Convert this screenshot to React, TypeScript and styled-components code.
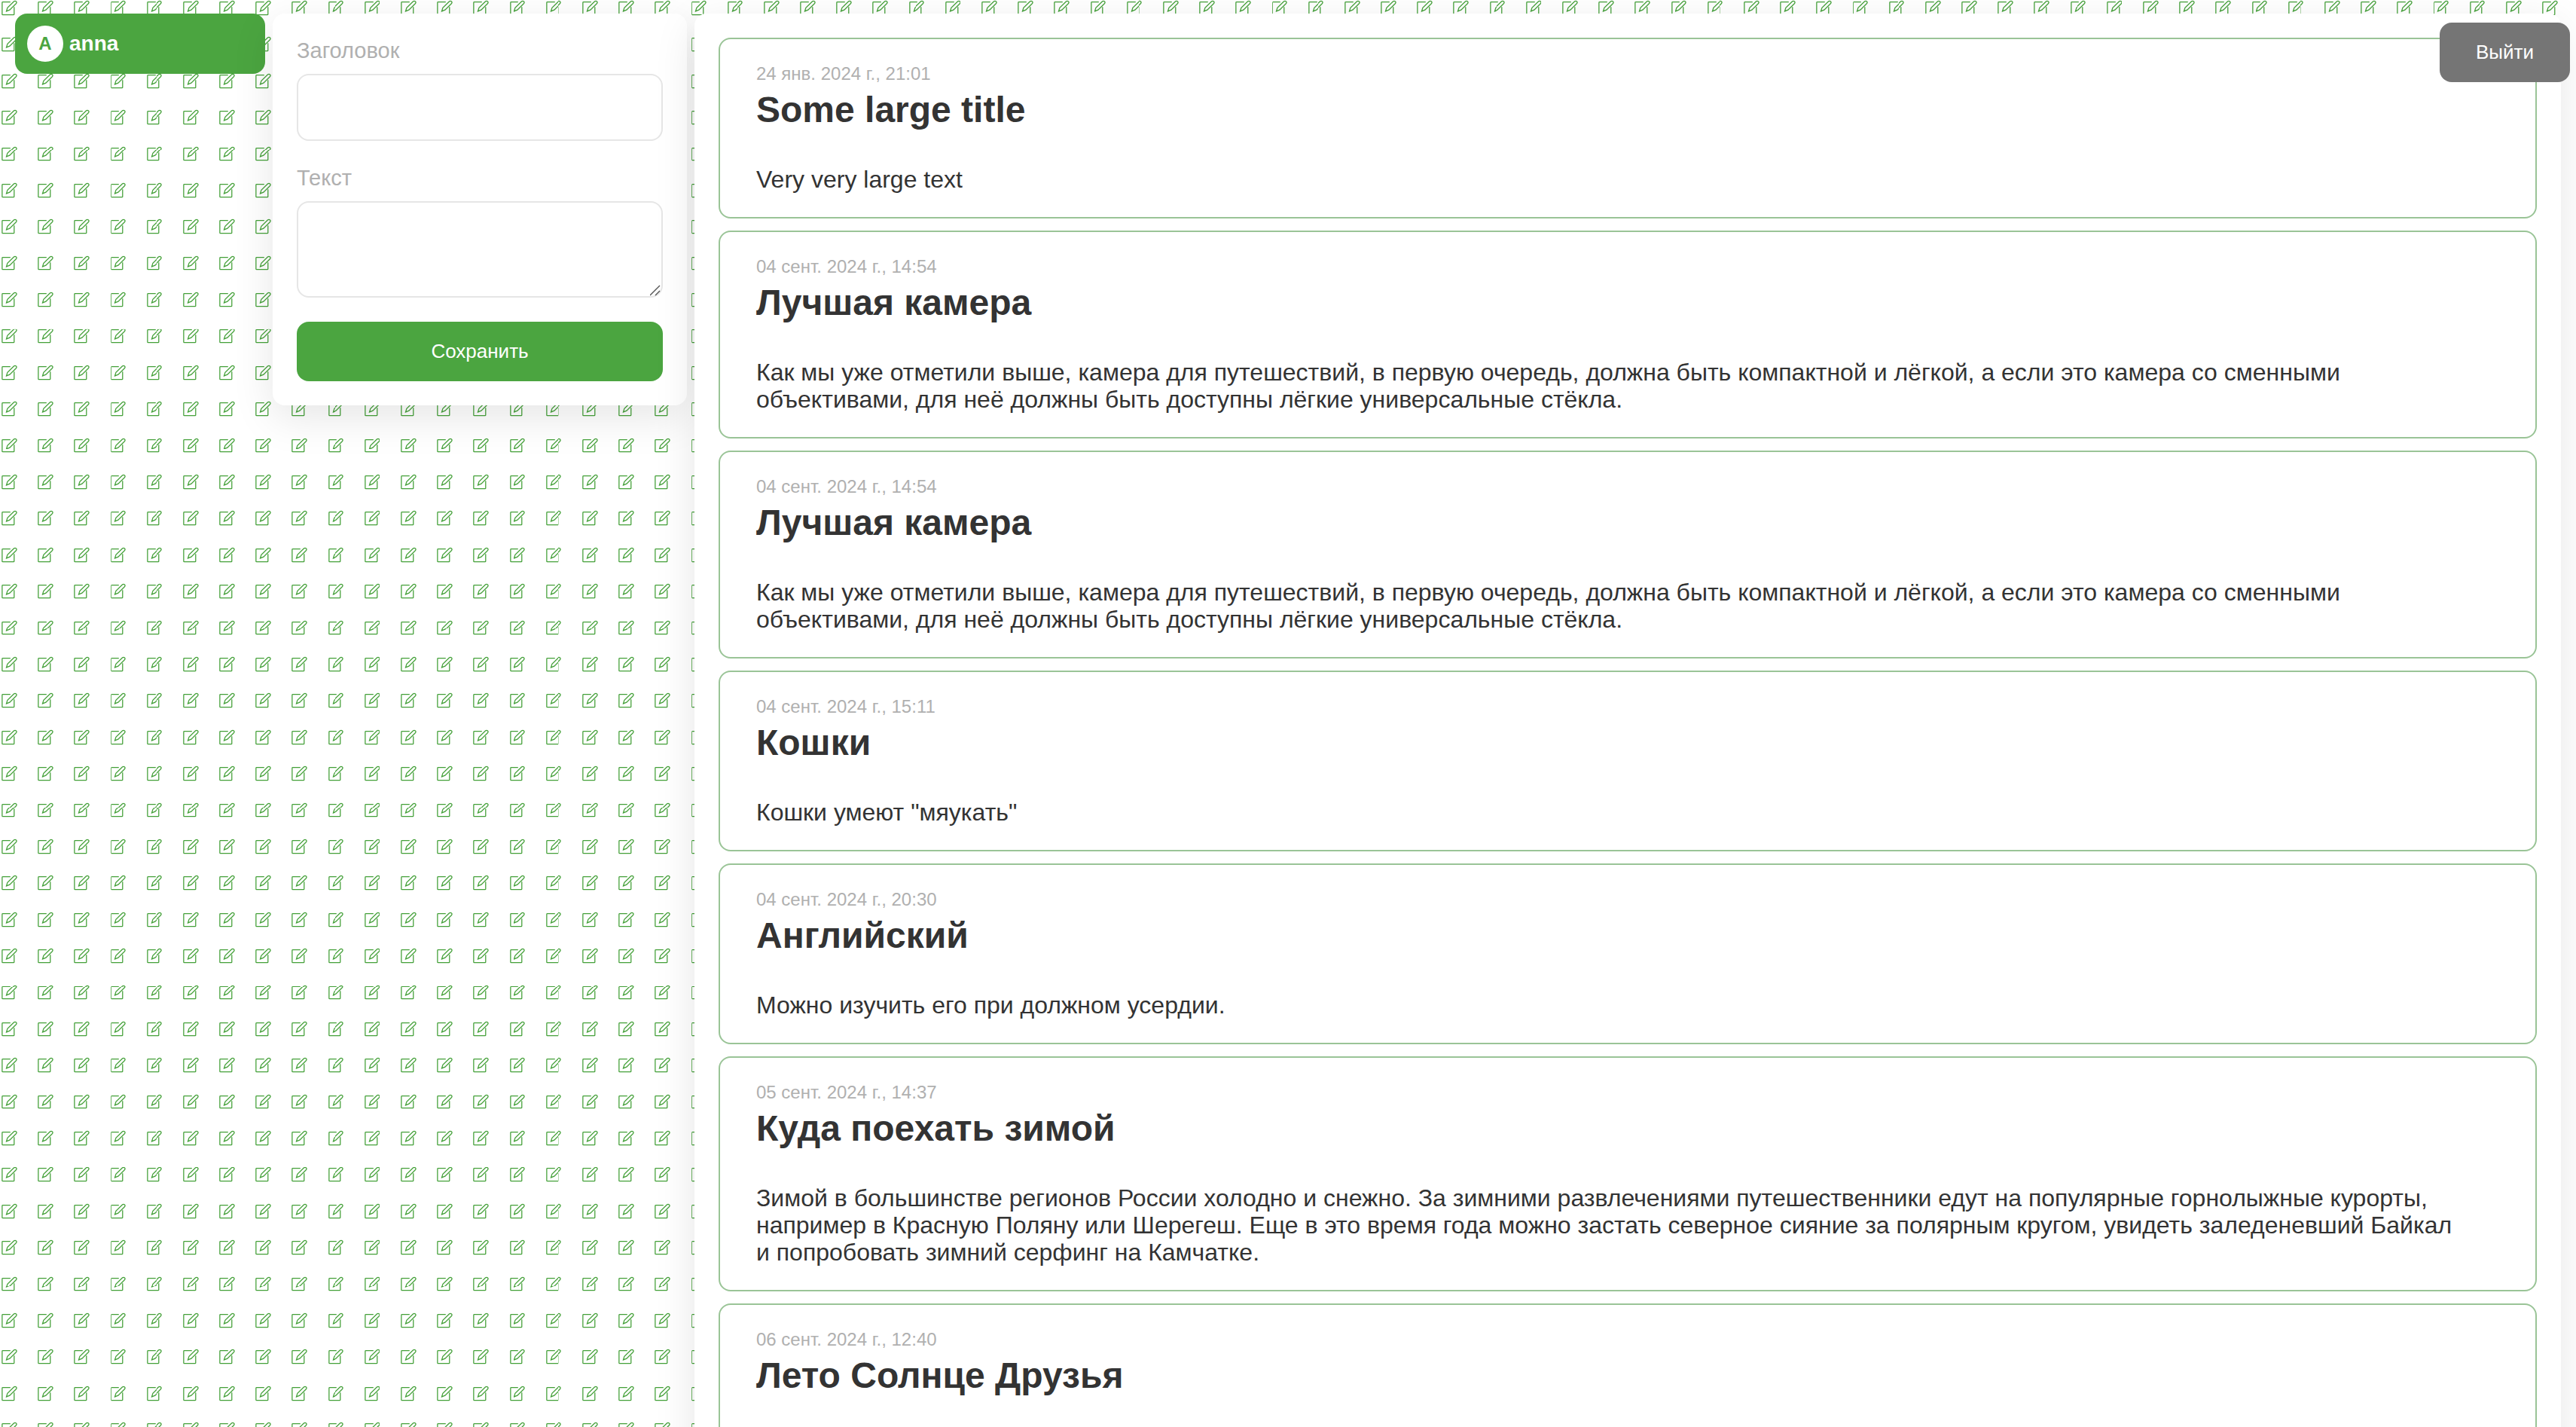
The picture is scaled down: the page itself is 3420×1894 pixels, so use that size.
import React from 'react';
import styled, { createGlobalStyle } from 'styled-components';

const GREEN = '#4ba540';

const tile = encodeURIComponent(
  `<svg xmlns="http://www.w3.org/2000/svg" width="48" height="48" viewBox="0 0 48 48" preserveAspectRatio="none" fill="none" stroke="#43a038" stroke-width="1.25"><path d="M13.5 2.6H3.6Q2.8 2.6 2.8 3.4V18.5Q2.8 19.3 3.6 19.3H17.6Q18.4 19.3 18.4 18.5V9"/><path d="M8.3 14.6L9.7 10.2L18 2Q19.6 0.6 21 1.9Q22.2 3.2 20.9 4.6L12.6 12.9Z"/></svg>`
);

const grip = encodeURIComponent(
  `<svg xmlns="http://www.w3.org/2000/svg" width="15" height="15" viewBox="0 0 15 15" stroke="#555" stroke-width="1.4"><path d="M0 14L13 1M7 14L13 8"/></svg>`
);

const GlobalStyle = createGlobalStyle`
  * { box-sizing: border-box; }
  body {
    margin: 0;
    min-height: 100vh;
    background: #fff url("data:image/svg+xml,${tile}") 0 0 / 1.409% 2.555%;
    font-family: Helvetica, "Liberation Sans", Arial, sans-serif;
    color: #333;
  }
`;

const Page = styled.div`
  display: flex;
  align-items: flex-start;
  gap: 10px;
  height: 100vh;
  padding: 18px 20px 0;
  overflow: hidden;
`;

const UserBadge = styled.div`
  flex: 0 0 332px;
  display: flex;
  align-items: center;
  gap: 8px;
  padding: 16px;
  border-radius: 16px;
  background: ${GREEN};
  color: #fff;
  font-size: 28px;
  font-weight: 700;
`;

const Avatar = styled.span`
  display: grid;
  place-items: center;
  width: 48px;
  height: 48px;
  border-radius: 50%;
  background: #fff;
  color: ${GREEN};
  font-size: 24px;
`;

const Panel = styled.div`
  padding: 32px;
  border-radius: 16px;
  background: #fff;
  box-shadow: 0 16px 56px rgba(0, 0, 0, 0.1);
`;

const NoteForm = styled(Panel).attrs({ as: 'form' })`
  flex: 0 0 550px;
  display: flex;
  flex-direction: column;
`;

const Label = styled.label`
  margin-bottom: 14px;
  color: #b0b0b0;
  font-size: 29px;
  line-height: 34px;
`;

const Input = styled.input`
  height: 89px;
  margin-bottom: 32px;
  padding: 0 24px;
  border: 2px solid #e6e6e6;
  border-radius: 16px;
  background: #fff;
  font: inherit;
  font-size: 28px;
`;

const TextArea = styled(Input).attrs({ as: 'textarea' })`
  height: 128px;
  padding: 24px;
  resize: vertical;

  &::-webkit-resizer {
    background: url("data:image/svg+xml,${grip}") no-repeat;
  }
`;

const Button = styled.button<{ $tone: string }>`
  padding: 24px 48px;
  border: 0;
  border-radius: 16px;
  background: ${(p) => p.$tone};
  color: #fff;
  font-family: inherit;
  font-size: 26px;
  line-height: 31px;
`;

const LogoutButton = styled(Button)`
  position: fixed;
  top: 30px;
  right: 8px;
`;

const Notes = styled(Panel)`
  flex: 1;
  min-width: 0;
  display: flex;
  flex-direction: column;
  gap: 16px;
`;

const Note = styled.article`
  padding: 32px 48px;
  border: 2px solid #9ac497;
  border-radius: 16px;
`;

const Posted = styled.time`
  display: block;
  color: #b0b0b0;
  font-size: 24px;
  line-height: 28px;
`;

const Title = styled.h2`
  margin: 6px 0 46px;
  font-size: 48px;
  line-height: 56px;
`;

const Body = styled.p`
  margin: 0;
  font-size: 32px;
  line-height: 36px;
`;

const camera =
  'Как мы уже отметили выше, камера для путешествий, в первую очередь, должна быть компактной и лёгкой, а если это камера со сменными объективами, для неё должны быть доступны лёгкие универсальные стёкла.';

const notes = [
  { date: '24 янв. 2024 г., 21:01', title: 'Some large title', text: 'Very very large text' },
  { date: '04 сент. 2024 г., 14:54', title: 'Лучшая камера', text: camera },
  { date: '04 сент. 2024 г., 14:54', title: 'Лучшая камера', text: camera },
  { date: '04 сент. 2024 г., 15:11', title: 'Кошки', text: 'Кошки умеют "мяукать"' },
  { date: '04 сент. 2024 г., 20:30', title: 'Английский', text: 'Можно изучить его при должном усердии.' },
  {
    date: '05 сент. 2024 г., 14:37',
    title: 'Куда поехать зимой',
    text: 'Зимой в большинстве регионов России холодно и снежно. За зимними развлечениями путешественники едут на популярные горнолыжные курорты, например в Красную Поляну или Шерегеш. Еще в это время года можно застать северное сияние за полярным кругом, увидеть заледеневший Байкал и\u00a0попробовать зимний серфинг на Камчатке.',
  },
  { date: '06 сент. 2024 г., 12:40', title: 'Лето Солнце Друзья', text: '' },
];

export default function App() {
  return (
    <>
      <GlobalStyle />
      <Page>
        <UserBadge>
          <Avatar>A</Avatar>
          anna
        </UserBadge>
        <NoteForm>
          <Label htmlFor="title">Заголовок</Label>
          <Input id="title" />
          <Label htmlFor="text">Текст</Label>
          <TextArea id="text" />
          <Button type="button" $tone={GREEN}>Сохранить</Button>
        </NoteForm>
        <Notes>
          {notes.map((note, i) => (
            <Note key={i}>
              <Posted>{note.date}</Posted>
              <Title>{note.title}</Title>
              <Body>{note.text}</Body>
            </Note>
          ))}
        </Notes>
      </Page>
      <LogoutButton type="button" $tone="#757575">Выйти</LogoutButton>
    </>
  );
}
